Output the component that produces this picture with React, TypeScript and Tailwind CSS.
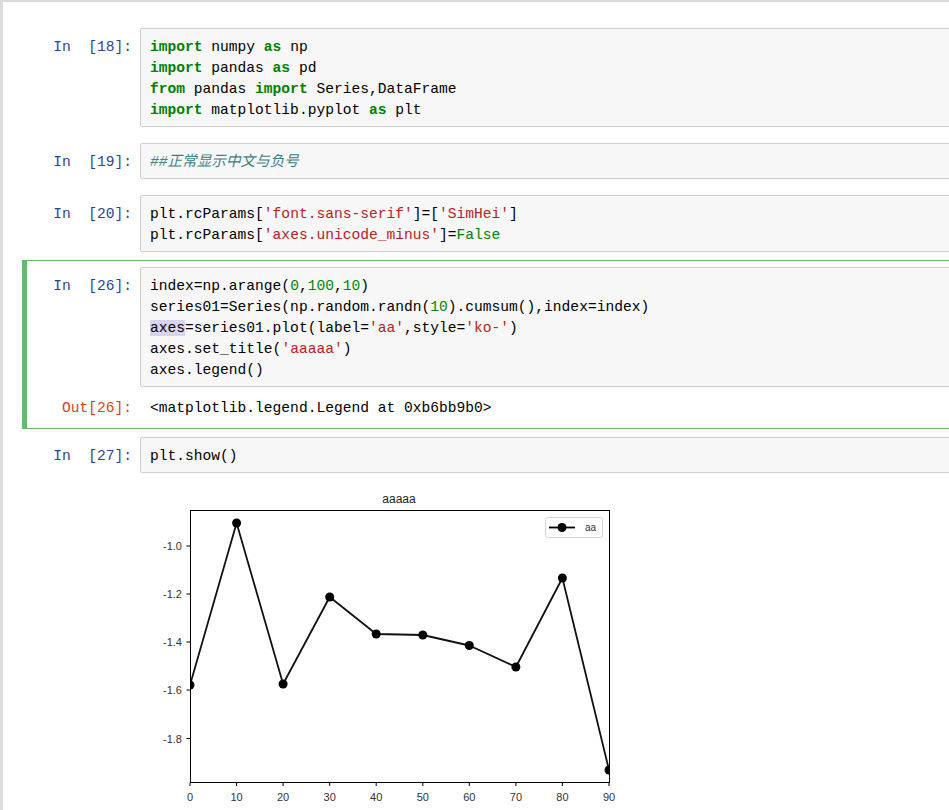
import React from 'react';

type Tok = [string, string?];

const tokClass: Record<string, string> = {
  kw: 'text-[#008000] font-bold',
  str: 'text-[#BA2121]',
  num: 'text-[#008800]',
  cm: 'text-[#408080] italic',
  bool: 'text-[#008000]',
  hl: 'bg-[#d7d4f0]',
};

const cells: { n: number; lines: Tok[][]; out?: string; selected?: boolean; plot?: boolean }[] = [
  {
    n: 18,
    lines: [
      [['import', 'kw'], [' numpy '], ['as', 'kw'], [' np']],
      [['import', 'kw'], [' pandas '], ['as', 'kw'], [' pd']],
      [['from', 'kw'], [' pandas '], ['import', 'kw'], [' Series,DataFrame']],
      [['import', 'kw'], [' matplotlib.pyplot '], ['as', 'kw'], [' plt']],
    ],
  },
  { n: 19, lines: [[['##正常显示中文与负号', 'cm']]] },
  {
    n: 20,
    lines: [
      [['plt.rcParams['], ["'font.sans-serif'", 'str'], [']=['], ["'SimHei'", 'str'], [']']],
      [['plt.rcParams['], ["'axes.unicode_minus'", 'str'], [']='], ['False', 'bool']],
    ],
  },
  {
    n: 26,
    selected: true,
    lines: [
      [['index=np.arange('], ['0', 'num'], [','], ['100', 'num'], [','], ['10', 'num'], [')']],
      [['series01=Series(np.random.randn('], ['10', 'num'], [').cumsum(),index=index)']],
      [['axes', 'hl'], ['=series01.plot(label='], ["'aa'", 'str'], [',style='], ["'ko-'", 'str'], [')']],
      [['axes.set_title('], ["'aaaaa'", 'str'], [')']],
      [['axes.legend()']],
    ],
    out: '<matplotlib.legend.Legend at 0xb6bb9b0>',
  },
  { n: 27, lines: [[['plt.show()']]], plot: true },
];

const xs = [190, 236.6, 283.1, 329.7, 376.2, 422.8, 469.3, 515.9, 562.4, 609];
const ys = [684, 522, 683, 596, 633, 634, 644.5, 666, 577, 769];
const yTicks = [
  ['-1.0', 545],
  ['-1.2', 593],
  ['-1.4', 641],
  ['-1.6', 689],
  ['-1.8', 737.5],
] as const;

const Plot = () => (
  <svg width={500} height={340} viewBox="140 472 500 340" className="block">
    <defs>
      <clipPath id="ax">
        <rect x={190} y={510} width={419} height={271.5} />
      </clipPath>
    </defs>
    <text x={399} y={502} textAnchor="middle" fontSize={12} fill="#222" fontFamily="'Liberation Sans', sans-serif">
      aaaaa
    </text>
    <g clipPath="url(#ax)">
      <polyline
        points={xs.map((x, i) => `${x},${ys[i]}`).join(' ')}
        fill="none"
        stroke="#111"
        strokeWidth={1.8}
        strokeLinejoin="round"
      />
      {xs.map((x, i) => (
        <circle key={i} cx={x} cy={ys[i]} r={4.5} fill="#000" />
      ))}
    </g>
    <rect x={190.5} y={509.5} width={419} height={272} fill="none" stroke="#000" strokeWidth={1} />
    {yTicks.map(([t, y]) => (
      <g key={t}>
        <line x1={186.5} x2={190} y1={y} y2={y} stroke="#000" />
        <text x={182} y={y + 4} textAnchor="end" fontSize={11} fill="#333" fontFamily="'Liberation Sans', sans-serif">
          {t}
        </text>
      </g>
    ))}
    {xs.map((x, i) => (
      <g key={i}>
        <line x1={x} x2={x} y1={781.5} y2={785} stroke="#000" />
        <text x={x} y={800} textAnchor="middle" fontSize={11} fill="#333" fontFamily="'Liberation Sans', sans-serif">
          {i * 10}
        </text>
      </g>
    ))}
    <rect x={545.5} y={516.5} width={57} height={20} rx={2} fill="#fff" stroke="#d6d6d6" />
    <line x1={549} x2={575} y1={526.5} y2={526.5} stroke="#000" strokeWidth={1.8} />
    <circle cx={562} cy={526.5} r={4.5} fill="#000" />
    <text x={585} y={530} fontSize={10} fill="#333" fontFamily="'Liberation Sans', sans-serif">
      aa
    </text>
  </svg>
);

const mono = 'font-[family-name:Liberation_Mono,Noto_Sans_CJK_SC,monospace] text-[14.6px] leading-[21px]';

export default function App() {
  return (
    <div className="w-[949px] h-[810px] overflow-hidden bg-white">
      <div className="w-[1000px] min-h-[900px] border-l-[3px] border-t-2 border-[#dcdcdc] pl-[19px] pt-[19px]">
        {cells.map((c) => (
          <div
            key={c.n}
            className={`border border-l-[5px] py-[6px] pl-[6px] ${
              c.selected ? 'border-[#66BB6A] -mt-[1px] mb-[1px]' : 'border-transparent mb-[2px]'
            } ${mono}`}
          >
            <div className="flex">
              <div className="w-[107px] shrink-0 pt-[9px] pr-[8px] text-right text-[#303F9F] whitespace-pre">
                {`In  [${c.n}]:`}
              </div>
              <div className="flex-1 border border-[#cfcfcf] bg-[#f7f7f7] rounded-[2px] px-[9px] pt-[8px] pb-[5px] text-black">
                {c.lines.map((l, i) => (
                  <div key={i} className="whitespace-pre">
                    {l.map(([t, k], j) => (
                      <span key={j} className={k ? tokClass[k] : ''}>
                        {t}
                      </span>
                    ))}
                  </div>
                ))}
              </div>
            </div>
            {c.out && (
              <div className="flex pt-[11px] pb-[3px]">
                <div className="w-[107px] shrink-0 pr-[8px] text-right text-[#D84315]">{`Out[${c.n}]:`}</div>
                <div className="pl-[10px] whitespace-pre text-black">{c.out}</div>
              </div>
            )}
            {c.plot && (
              <div className="flex">
                <div className="w-[107px] shrink-0" />
                <Plot />
              </div>
            )}
          </div>
        ))}
      </div>
    </div>
  );
}
